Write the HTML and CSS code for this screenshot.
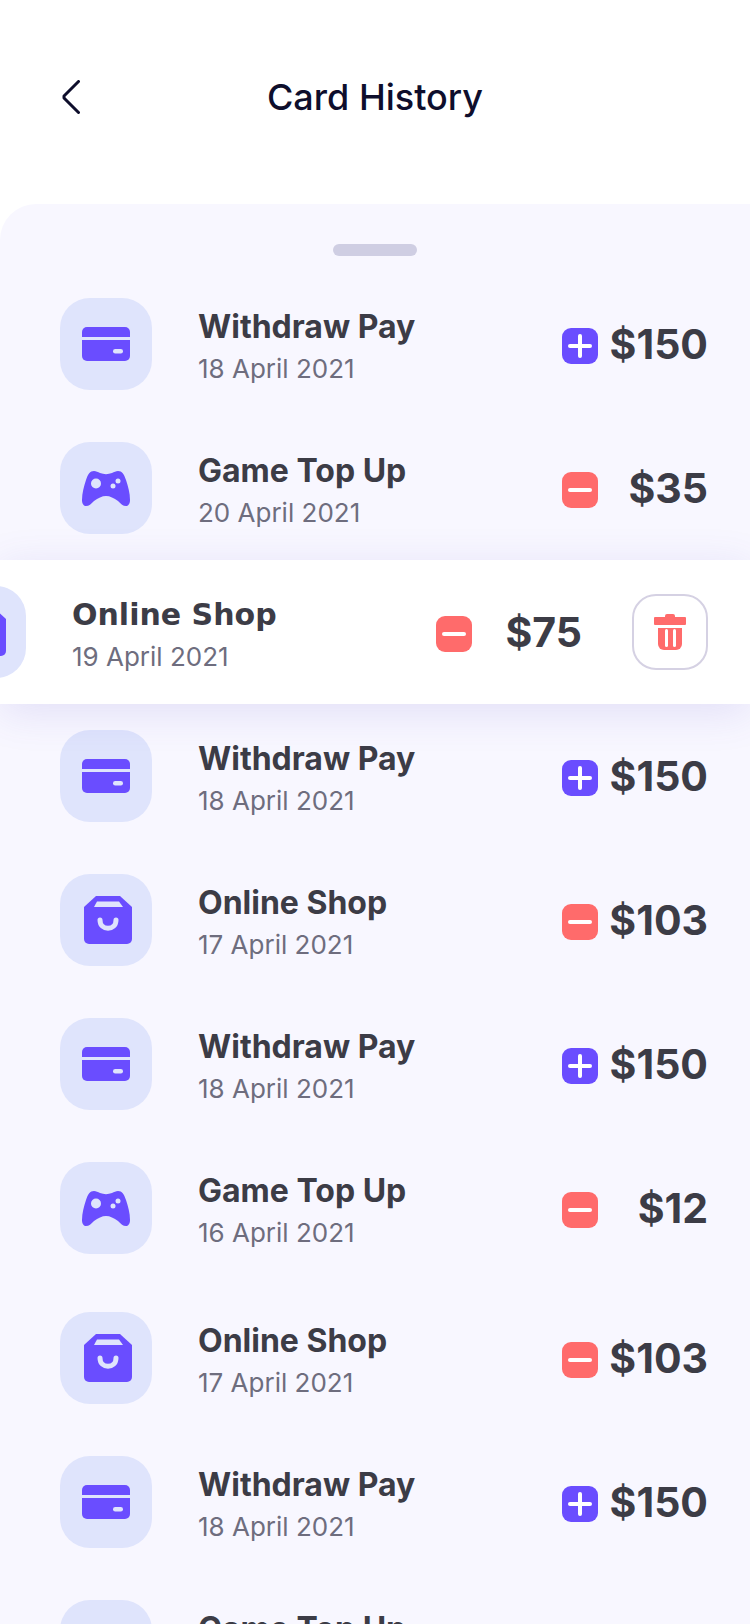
FILE: index.html
```html
<!DOCTYPE html>
<html lang="en">
<head>
    <meta charset="UTF-8">
    <meta name="viewport" content="width=device-width, initial-scale=1.0">
    <link rel="stylesheet" href="styles.css">
    <title>Card History</title>
</head>
<body>
    <svg class="sprite" xmlns="http://www.w3.org/2000/svg">
        <symbol id="ic-card" viewBox="0 0 48 34">
            <path fill="#6a4dff" d="M5 0H43A5 5 0 0 1 48 5V10H0V5A5 5 0 0 1 5 0Z"/>
            <path fill="#6a4dff" d="M0 13H48V29A5 5 0 0 1 43 34H5A5 5 0 0 1 0 29Z"/>
            <rect fill="#dfe4fc" x="31" y="22" width="10" height="4.5" rx="2.2"/>
        </symbol>
        <symbol id="ic-game" viewBox="0 0 48 35">
            <path fill="#6a4dff" d="M12 0C14 0 16 1 18 2C22 3.5 26 3.5 30 2C32 1 34 0 36 0C40 0 42 3 44 9C46 15 48 22 48 29C48 33 46 35 44 35C41 35 39 33 36 30C32 27 28 25 24 25C20 25 16 27 12 30C9 33 7 35 4 35C2 35 0 33 0 29C0 22 2 15 4 9C6 3 8 0 12 0Z"/>
            <circle fill="#dfe4fc" cx="14" cy="12.500" r="5"/>
            <circle fill="#dfe4fc" cx="31" cy="15" r="2.500"/>
            <circle fill="#dfe4fc" cx="36" cy="10" r="2.500"/>
        </symbol>
        <symbol id="ic-bag" viewBox="0 0 48 48">
            <path fill="#6a4dff" d="M12 0H36L48 11V43A5 5 0 0 1 43 48H5A5 5 0 0 1 0 43V11Z"/>
            <path fill="#dfe4fc" d="M13 5.500H35L39 11H10Z"/>
            <path fill="none" stroke="#dfe4fc" stroke-width="5" stroke-linecap="round" d="M16 24C16 35 32 35 32 24"/>
        </symbol>
        <symbol id="ic-trash" viewBox="0 0 32 36">
            <path fill="#ff6b6b" d="M11 3V2A2 2 0 0 1 13 0H19A2 2 0 0 1 21 2V3H31A1 1 0 0 1 32 4V10A1 1 0 0 1 31 11H1A1 1 0 0 1 0 10V4A1 1 0 0 1 1 3Z"/>
            <path fill="#ff6b6b" d="M4 14H28V30A6 6 0 0 1 22 36H10A6 6 0 0 1 4 30Z"/>
            <rect fill="#fff" x="11" y="15" width="3" height="18" rx="1.500"/>
            <rect fill="#fff" x="19" y="15" width="3" height="18" rx="1.500"/>
        </symbol>
    </svg>

    <div class="screen">
        <header class="topbar">
            <svg class="back" viewBox="0 0 18 34" width="18" height="34">
                <path d="M16.500 1.500L2 16L2 18L16.500 32.500" fill="none" stroke="#0e0e2c" stroke-width="3" stroke-linecap="round" stroke-linejoin="round"/>
            </svg>
            <h1>Card History</h1>
        </header>

        <main class="sheet">
            <div class="handle"></div>

            <div class="row">
                <div class="row-icon"><svg class="ic-card"><use href="#ic-card"/></svg></div>
                <div class="info"><div class="name">Withdraw Pay</div><div class="date">18 April 2021</div></div>
                <div class="money"><span class="sign plus"></span><span class="amount">$150</span></div>
            </div>

            <div class="row">
                <div class="row-icon"><svg class="ic-game"><use href="#ic-game"/></svg></div>
                <div class="info"><div class="name">Game Top Up</div><div class="date">20 April 2021</div></div>
                <div class="money"><span class="sign minus"></span><span class="amount">$35</span></div>
            </div>

            <div class="row row-swiped">
                <div class="row-icon"><svg class="ic-bag"><use href="#ic-bag"/></svg></div>
                <div class="info"><div class="name">Online Shop</div><div class="date">19 April 2021</div></div>
                <div class="money"><span class="sign minus"></span><span class="amount">$75</span></div>
                <button class="delete"><svg class="ic-trash"><use href="#ic-trash"/></svg></button>
            </div>

            <div class="row">
                <div class="row-icon"><svg class="ic-card"><use href="#ic-card"/></svg></div>
                <div class="info"><div class="name">Withdraw Pay</div><div class="date">18 April 2021</div></div>
                <div class="money"><span class="sign plus"></span><span class="amount">$150</span></div>
            </div>

            <div class="row">
                <div class="row-icon"><svg class="ic-bag"><use href="#ic-bag"/></svg></div>
                <div class="info"><div class="name">Online Shop</div><div class="date">17 April 2021</div></div>
                <div class="money"><span class="sign minus"></span><span class="amount">$103</span></div>
            </div>

            <div class="row">
                <div class="row-icon"><svg class="ic-card"><use href="#ic-card"/></svg></div>
                <div class="info"><div class="name">Withdraw Pay</div><div class="date">18 April 2021</div></div>
                <div class="money"><span class="sign plus"></span><span class="amount">$150</span></div>
            </div>

            <div class="row">
                <div class="row-icon"><svg class="ic-game"><use href="#ic-game"/></svg></div>
                <div class="info"><div class="name">Game Top Up</div><div class="date">16 April 2021</div></div>
                <div class="money"><span class="sign minus"></span><span class="amount">$12</span></div>
            </div>

            <div class="row row-shifted">
                <div class="row-icon"><svg class="ic-bag"><use href="#ic-bag"/></svg></div>
                <div class="info"><div class="name">Online Shop</div><div class="date">17 April 2021</div></div>
                <div class="money"><span class="sign minus"></span><span class="amount">$103</span></div>
            </div>

            <div class="row">
                <div class="row-icon"><svg class="ic-card"><use href="#ic-card"/></svg></div>
                <div class="info"><div class="name">Withdraw Pay</div><div class="date">18 April 2021</div></div>
                <div class="money"><span class="sign plus"></span><span class="amount">$150</span></div>
            </div>

            <div class="row">
                <div class="row-icon"><svg class="ic-game"><use href="#ic-game"/></svg></div>
                <div class="info"><div class="name">Game Top Up</div><div class="date">20 April 2021</div></div>
                <div class="money"><span class="sign minus"></span><span class="amount">$35</span></div>
            </div>
        </main>
    </div>
</body>
</html>
```

FILE: styles.css
```css
*{
    box-sizing: border-box;
    font-family: "Inter", sans-serif;
}

body{
    margin: 0;
    background-color: white;
}

h1{
    margin: 0;
    font-size: 36px;
    line-height: 44px;
    font-weight: 500;
    color: #0e0e2c;
}

.sprite{
    display: none;
}

.screen{
    width: 750px;
    height: 1624px;
    overflow: hidden;
}

.topbar{
    height: 204px;
    padding-top: 75px;
    display: flex;
    justify-content: center;
    position: relative;
}

.back{
    position: absolute;
    left: 62px;
    top: 80px;
}

.sheet{
    background-color: #f8f7ff;
    border-radius: 36px 0 0 0;
    padding-top: 40px;
}

.handle{
    width: 84px;
    height: 12px;
    margin: 0 auto 16px;
    border-radius: 6px;
    background-color: #cfcee3;
}

.row{
    height: 144px;
    padding: 0 42px 0 60px;
    display: flex;
    align-items: center;
}

.row-shifted{
    margin-top: 6px;
}

.row-icon{
    width: 92px;
    height: 92px;
    flex-shrink: 0;
    margin-right: 46px;
    border-radius: 30px;
    background-color: #dfe4fc;
    display: flex;
    align-items: center;
    justify-content: center;
}

.ic-card{
    width: 48px;
    height: 34px;
}

.ic-game{
    width: 48px;
    height: 35px;
}

.ic-bag{
    width: 48px;
    height: 48px;
    margin-left: 4px;
}

.ic-trash{
    width: 32px;
    height: 36px;
}

.info{
    flex: 1;
    margin-top: 3px;
}

.name{
    font-size: 32px;
    line-height: 40px;
    font-weight: 700;
    color: #3c3c46;
}

.date{
    margin-top: 6px;
    font-size: 26px;
    line-height: 32px;
    color: #6e6d7e;
}

.money{
    width: 146px;
    margin-top: 4px;
    display: flex;
    align-items: center;
    justify-content: space-between;
}

.sign{
    width: 36px;
    height: 36px;
    border-radius: 9px;
    position: relative;
}

.sign::before{
    content: "";
    position: absolute;
    left: 6px;
    top: 16px;
    width: 24px;
    height: 4px;
    border-radius: 2px;
    background-color: white;
}

.plus{
    background-color: #6a4dff;
}

.plus::after{
    content: "";
    position: absolute;
    left: 16px;
    top: 6px;
    width: 4px;
    height: 24px;
    border-radius: 2px;
    background-color: white;
}

.minus{
    background-color: #ff6b6b;
}

.amount{
    margin-bottom: 4px;
    font-size: 41px;
    line-height: 48px;
    font-weight: 700;
    color: #3c3c46;
}

.row-swiped{
    padding: 0 42px 0 0;
    background-color: white;
    position: relative;
    box-shadow: 0 8px 40px rgba(90, 80, 200, 0.14);
}

.row-swiped .row-icon{
    margin-left: -66px;
}

.row-swiped .name{
    font-family: "DejaVu Sans", sans-serif;
    font-size: 30px;
}

.row-swiped .money{
    margin-right: 50px;
}

.delete{
    width: 76px;
    height: 76px;
    padding: 0;
    border: 2px solid #d5d1e3;
    border-radius: 24px;
    background-color: white;
    display: flex;
    align-items: center;
    justify-content: center;
}
```
